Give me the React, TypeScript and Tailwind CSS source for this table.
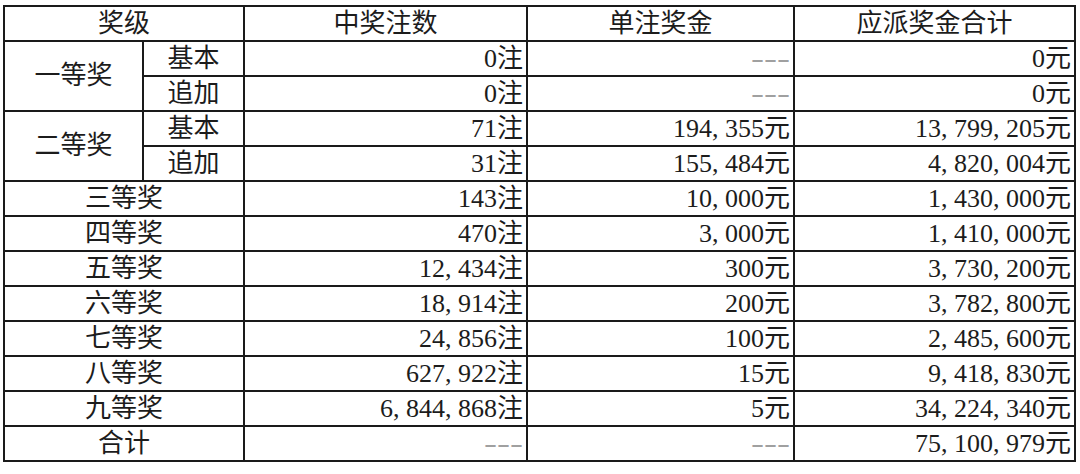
const rows: { label: string; count: string; unit: string; total: string }[] = [
  { label: "三等奖", count: "143注", unit: "10,000元", total: "1,430,000元" },
  { label: "四等奖", count: "470注", unit: "3,000元", total: "1,410,000元" },
  { label: "五等奖", count: "12,434注", unit: "300元", total: "3,730,200元" },
  { label: "六等奖", count: "18,914注", unit: "200元", total: "3,782,800元" },
  { label: "七等奖", count: "24,856注", unit: "100元", total: "2,485,600元" },
  { label: "八等奖", count: "627,922注", unit: "15元", total: "9,418,830元" },
  { label: "九等奖", count: "6,844,868注", unit: "5元", total: "34,224,340元" },
];

const cell = "border-2 border-[#1a1a1a] h-[35px] p-0 leading-none";
const num = cell + " text-right pr-[3px]";
const mid = cell + " text-center";

// SimSun-like layout: every half-width char, comma included, takes half an em
function Amount({ value }: { value: string }) {
  const parts = value.split(",");
  return (
    <>
      {parts.map((p, i) => (
        <span key={i}>
          {i > 0 && <span className="inline-block w-[0.5em] text-left">,</span>}
          {p}
        </span>
      ))}
    </>
  );
}

function Dash() {
  return (
    <span className="text-[#a0a0a0]">
      {["-", "-", "-"].map((d, i) => (
        <span key={i} className="inline-block w-[0.5em] text-center scale-x-[1.5]">
          {d}
        </span>
      ))}
    </span>
  );
}

export default function App() {
  return (
    <div className="w-[1080px] h-[474px] bg-white pt-[5px] pl-[3px]">
      <table
        className="table-fixed border-collapse w-[1071px] text-[26px] text-[#1c1c1c]"
        style={{ fontFamily: '"Liberation Serif", "Noto Sans CJK SC", serif' }}
      >
        <colgroup>
          <col className="w-[139px]" />
          <col className="w-[101px]" />
          <col className="w-[283px]" />
          <col className="w-[267px]" />
          <col className="w-[281px]" />
        </colgroup>
        <tbody>
          <tr>
            <td colSpan={2} className={mid}>奖级</td>
            <td className={mid}>中奖注数</td>
            <td className={mid}>单注奖金</td>
            <td className={mid}>应派奖金合计</td>
          </tr>
          <tr>
            <td rowSpan={2} className={mid}>一等奖</td>
            <td className={mid}>基本</td>
            <td className={num}>0注</td>
            <td className={num}><Dash /></td>
            <td className={num}>0元</td>
          </tr>
          <tr>
            <td className={mid}>追加</td>
            <td className={num}>0注</td>
            <td className={num}><Dash /></td>
            <td className={num}>0元</td>
          </tr>
          <tr>
            <td rowSpan={2} className={mid}>二等奖</td>
            <td className={mid}>基本</td>
            <td className={num}>71注</td>
            <td className={num}><Amount value="194,355元" /></td>
            <td className={num}><Amount value="13,799,205元" /></td>
          </tr>
          <tr>
            <td className={mid}>追加</td>
            <td className={num}>31注</td>
            <td className={num}><Amount value="155,484元" /></td>
            <td className={num}><Amount value="4,820,004元" /></td>
          </tr>
          {rows.map((r) => (
            <tr key={r.label}>
              <td colSpan={2} className={mid}>{r.label}</td>
              <td className={num}><Amount value={r.count} /></td>
              <td className={num}><Amount value={r.unit} /></td>
              <td className={num}><Amount value={r.total} /></td>
            </tr>
          ))}
          <tr>
            <td colSpan={2} className={mid}>合计</td>
            <td className={num}><Dash /></td>
            <td className={num}><Dash /></td>
            <td className={num}><Amount value="75,100,979元" /></td>
          </tr>
        </tbody>
      </table>
    </div>
  );
}
